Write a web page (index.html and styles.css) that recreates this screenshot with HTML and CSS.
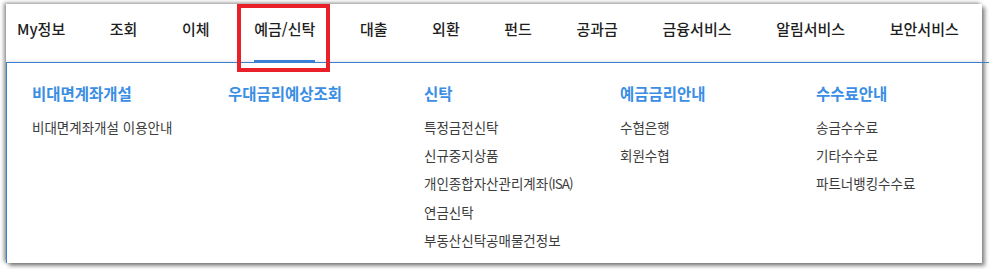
FILE: index.html
```html
<!DOCTYPE html>
<html lang="ko">
<head>
<meta charset="utf-8">
<title>예금/신탁 메뉴</title>
<link rel="stylesheet" href="styles.css">
</head>
<body>
<div class="frame">
  <nav class="gnb">
    <a class="gnb-item">My정보</a>
    <a class="gnb-item">조회</a>
    <a class="gnb-item">이체</a>
    <a class="gnb-item active">예금/신탁</a>
    <a class="gnb-item">대출</a>
    <a class="gnb-item">외환</a>
    <a class="gnb-item">펀드</a>
    <a class="gnb-item">공과금</a>
    <a class="gnb-item">금융서비스</a>
    <a class="gnb-item">알림서비스</a>
    <a class="gnb-item">보안서비스</a>
  </nav>
  <div class="drop">
    <div class="strip"></div>
    <div class="panel">
      <div class="col">
        <h3 class="col-title">비대면계좌개설</h3>
        <ul class="col-list">
          <li>비대면계좌개설 이용안내</li>
        </ul>
      </div>
      <div class="col">
        <h3 class="col-title">우대금리예상조회</h3>
      </div>
      <div class="col">
        <h3 class="col-title">신탁</h3>
        <ul class="col-list">
          <li>특정금전신탁</li>
          <li>신규중지상품</li>
          <li>개인종합자산관리계좌<span class="narrow">(ISA)</span></li>
          <li>연금신탁</li>
          <li>부동산신탁공매물건정보</li>
        </ul>
      </div>
      <div class="col">
        <h3 class="col-title">예금금리안내</h3>
        <ul class="col-list">
          <li>수협은행</li>
          <li>회원수협</li>
        </ul>
      </div>
      <div class="col">
        <h3 class="col-title">수수료안내</h3>
        <ul class="col-list">
          <li>송금수수료</li>
          <li>기타수수료</li>
          <li>파트너뱅킹수수료</li>
        </ul>
      </div>
    </div>
  </div>
  <div class="highlight"></div>
</div>
</body>
</html>
```
FILE: styles.css
```css
* { box-sizing: border-box; }
html, body {
  margin: 0;
  padding: 0;
  background: #ffffff;
}
body {
  font-family: "Noto Sans CJK KR", "Noto Sans", sans-serif;
  width: 989px;
  height: 269px;
  overflow: hidden;
}
.frame {
  position: relative;
  margin: 4px 0 0 6px;
  width: 976px;
  height: 259px;
  background: #fff;
  box-shadow: -2px -1px 4px rgba(0,0,0,0.45), 3px 3px 4px rgba(0,0,0,0.45);
  display: flex;
  flex-direction: column;
}
.gnb {
  height: 58px;
  display: flex;
  gap: 44.6px;
  padding-left: 11px;
  background: linear-gradient(to bottom, #fff 0, #fff 55px, #ececec 58px);
}
.gnb-item {
  position: relative;
  display: block;
  font-size: 15px;
  font-weight: 500;
  line-height: 20px;
  padding-top: 15px;
  color: #1e1e1e;
  text-decoration: none;
  white-space: nowrap;
}
.gnb-item.active::after {
  content: "";
  position: absolute;
  left: 0;
  right: 0;
  bottom: -1px;
  height: 3px;
  background: #3a7fd6;
  z-index: 2;
}
.drop {
  flex: 1;
  display: flex;
}
.strip {
  width: 5px;
  background-color: #a5e2cd;
  background-image: repeating-linear-gradient(to bottom, transparent 0, transparent 5px, #d6f3e9 5px, #d6f3e9 6px);
  background-size: 1px 100%;
  background-position: 2px 0;
  background-repeat: no-repeat;
}
.panel {
  flex: 1;
  display: flex;
  border-left: 1px solid #3a7fd0;
  border-top: 1px solid #3a7fd0;
  padding: 20px 0 0 25px;
}
.col {
  width: 196px;
}
.col-title {
  margin: 0;
  font-size: 15.5px;
  font-weight: bold;
  line-height: 20px;
  color: #3a8ee4;
}
.col-list {
  list-style: none;
  margin: 10px 0 0;
  padding: 0;
}
.col-list li {
  font-size: 13.5px;
  line-height: 28.2px;
  color: #3c3c3c;
  white-space: nowrap;
}
.narrow {
  letter-spacing: -1px;
}
.highlight {
  position: absolute;
  left: 231px;
  top: 0;
  width: 93px;
  height: 68px;
  border: 4px solid #e8202a;
  z-index: 5;
}
```
